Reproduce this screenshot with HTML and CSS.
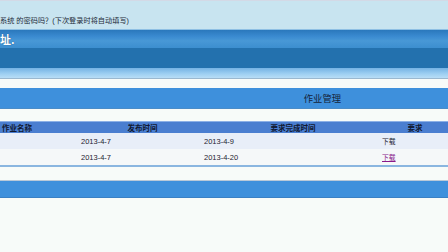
FILE: index.html
```html
<!DOCTYPE html>
<html lang="zh">
<head>
<meta charset="utf-8">
<link rel="stylesheet" href="styles.css">
</head>
<body>
<div class="page">
  <div class="login-band">
    <span class="hint">系统 的密码吗？(下次登录时将自动填写)</span>
  </div>
  <div class="title-bar"><span class="site">址.</span></div>
  <div class="nav-dark"></div>
  <div class="nav-light"></div>
  <div class="gap"></div>
  <div class="section-title">作业管理</div>
  <div class="gap gap-lg"></div>
  <div class="table">
    <div class="row head">
      <div class="cell first">作业名称</div>
      <div class="cell">发布时间</div>
      <div class="cell">要求完成时间</div>
      <div class="cell">要求</div>
    </div>
    <div class="row odd">
      <div class="cell first"></div>
      <div class="cell">2013-4-7</div>
      <div class="cell">2013-4-9</div>
      <div class="cell"><span class="dl">下载</span></div>
    </div>
    <div class="row even">
      <div class="cell first"></div>
      <div class="cell">2013-4-7</div>
      <div class="cell">2013-4-20</div>
      <div class="cell"><a class="dl visited" href="#">下载</a></div>
    </div>
  </div>
  <div class="gap gap-md"></div>
  <div class="footer-bar"></div>
  <div class="rest"></div>
</div>
</body>
</html>
```
FILE: styles.css
```css
html, body {
  margin: 0;
  padding: 0;
  background: #f7fbf9;
}
.page {
  width: 448px;
  height: 252px;
  overflow: hidden;
  display: flex;
  flex-direction: column;
  font-family: "Liberation Sans", "Noto Sans CJK SC", sans-serif;
}
.login-band {
  flex: none;
  height: 30px;
  box-sizing: border-box;
  border-top: 1px solid #d3d9e6;
  border-bottom: 1px solid #8fc0e4;
  background: #c8e4f0;
  display: flex;
  align-items: flex-end;
  padding-bottom: 3px;
}
.hint {
  font-size: 7.2px;
  color: #1d2a38;
  line-height: 10px;
  white-space: nowrap;
}
.title-bar {
  flex: none;
  height: 18px;
  background: linear-gradient(#2a78bc 0%, #3a8ad0 35%, #4898d6 60%, #3c8ecf 100%);
  display: flex;
  align-items: center;
}
.site {
  font-family: "Noto Sans CJK SC", sans-serif;
  font-size: 11px;
  font-weight: bold;
  color: #ffffff;
  text-shadow: 0 0 1px #1b4f80;
  line-height: 12px;
}
.nav-dark {
  flex: none;
  height: 20px;
  background: #2371ae;
}
.nav-light {
  flex: none;
  height: 10px;
  background: linear-gradient(#74b2e4, #9fd0f2 60%, #b8ddf6);
  border-bottom: 1px solid #9ab8d0;
}
.gap {
  flex: none;
  height: 9px;
  background: #f7fbf9;
}
.gap-lg { height: 12px; }
.gap-md { height: 13px; border-bottom: 1px solid #b9c9d8; }
.section-title {
  flex: none;
  height: 20px;
  background: #3e90dc;
  border-bottom: 1px solid #4a8cc8;
  display: flex;
  align-items: center;
  justify-content: flex-end;
  padding-right: 107px;
  font-family: "Noto Sans CJK SC", sans-serif;
  font-size: 9.3px;
  color: #15243a;
}
.table {
  flex: none;
  border-top: 1px solid #8cb0e6;
  border-bottom: 2px solid #8ab6e0;
}
.row {
  display: grid;
  grid-template-columns: 81px 123px 178px 66px;
  align-items: center;
}
.cell {
  font-size: 7.5px;
  color: #1d2230;
  white-space: nowrap;
}
.head {
  height: 11px;
  background: #4a7ed0;
}
.head .cell {
  font-family: "Noto Sans CJK SC", sans-serif;
  font-weight: bold;
  font-size: 7.5px;
  color: #101830;
  text-align: center;
  line-height: 11px;
}
.head .cell.first {
  text-align: left;
  padding-left: 2px;
}
.odd {
  height: 16px;
  background: #e8eef8;
}
.even {
  height: 16px;
  background: #f5f8f9;
}
.dl {
  font-family: "Noto Sans CJK SC", sans-serif;
  font-size: 6.8px;
  color: #1d2230;
}
.visited {
  color: #8a1a8a;
  text-decoration: underline;
}
.footer-bar {
  flex: none;
  height: 16px;
  background: #3e90dc;
  border-bottom: 1px solid #3a80c4;
}
.rest {
  flex: 1;
  background: #f7fbf9;
}
```
